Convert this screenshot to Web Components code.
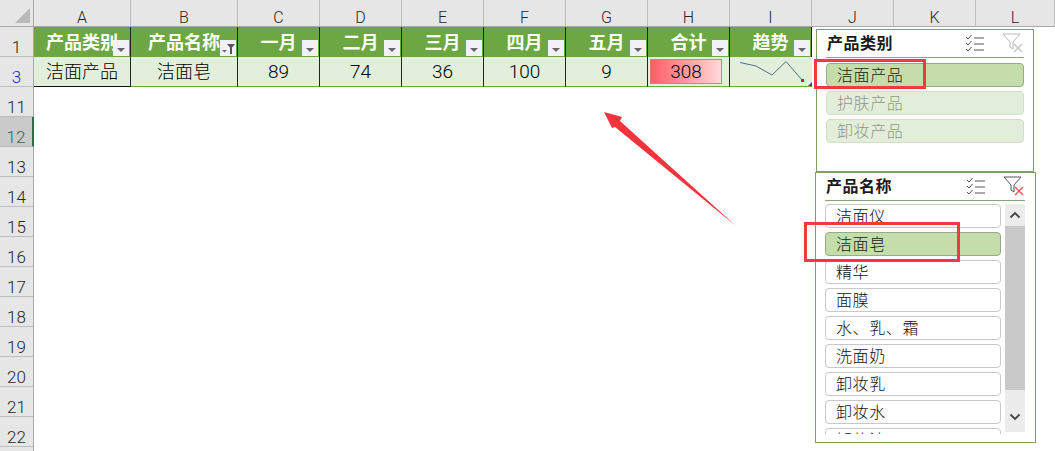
<!DOCTYPE html>
<html lang="zh">
<head>
<meta charset="utf-8">
<style>
  html, body { margin: 0; height: 100%; overflow: hidden; background: #fff; }
  body { font-family: "Noto Sans CJK SC", "Liberation Sans", sans-serif; }
</style>
</head>
<body>
<excel-sheet></excel-sheet>

<sheet-slicer title="产品类别" style="left:816px;top:29px;width:218px;height:143px" inactive>
  <slicer-item selected>洁面产品</slicer-item>
  <slicer-item dim>护肤产品</slicer-item>
  <slicer-item dim>卸妆产品</slicer-item>
</sheet-slicer>

<sheet-slicer title="产品名称" style="left:815px;top:172px;width:221px;height:271px" scroll>
  <slicer-item plain>洁面仪</slicer-item>
  <slicer-item selected>洁面皂</slicer-item>
  <slicer-item plain>精华</slicer-item>
  <slicer-item plain>面膜</slicer-item>
  <slicer-item plain>水、乳、霜</slicer-item>
  <slicer-item plain>洗面奶</slicer-item>
  <slicer-item plain>卸妆乳</slicer-item>
  <slicer-item plain>卸妆水</slicer-item>
  <slicer-item plain>卸妆油</slicer-item>
</sheet-slicer>

<red-marks></red-marks>

<script>
// dropdown button in the table header
class FilterButton extends HTMLElement {
  connectedCallback() {
    const filtered = this.hasAttribute('filtered');
    this.attachShadow({ mode: 'open' }).innerHTML = `
      <style>
        :host { display: block; width: 16px; height: 16px; background: #f1f1f7; }
        svg { display: block; }
      </style>
      <svg width="16" height="16" viewBox="0 0 16 16">
        ${filtered
          ? '<path d="M2 10h5l-2.500 2.500z" fill="#666"/><path d="M7 4h8l-3 3.500V14h-2V7.500z" fill="#555"/>'
          : '<path d="M4 8h8l-4 4z" fill="#666"/>'}
      </svg>`;
  }
}
customElements.define('filter-button', FilterButton);

// the worksheet: row/column headers plus the filtered table
class ExcelSheet extends HTMLElement {
  connectedCallback() {
    const cols = ['A', 'B', 'C', 'D', 'E', 'F', 'G', 'H', 'I', 'J', 'K', 'L'];
    const head = ['产品类别', '产品名称', '一月', '二月', '三月', '四月', '五月', '合计', '趋势'];
    const row = ['洁面产品', '洁面皂', '89', '74', '36', '100', '9'];
    const rows = [11, 12, 13, 14, 15, 16, 17, 18, 19, 20, 21, 22];

    this.attachShadow({ mode: 'open' }).innerHTML = `
      <style>
        :host {
          display: grid;
          width: 1055px;
          height: 451px;
          overflow: hidden;
          grid-template-columns: 34px 97px 107px repeat(9, 82px) 1fr;
          grid-template-rows: 27px 30px 30px repeat(12, 30px) 1fr;
          font-family: "Noto Sans CJK SC", sans-serif;
        }
        .corner, .ch, .rh { background: #e6e6e6; box-sizing: border-box; color: #262626;
          font: 300 16px/1 Roboto, "Liberation Sans", sans-serif; display: flex; }
        .corner { border-right: 1px solid #a8a8a8; border-bottom: 1px solid #a8a8a8; align-items: flex-end; justify-content: flex-end; padding: 0 3px 3px 0; }
        .ch { border-right: 1px solid #bcbcbc; border-bottom: 1px solid #a8a8a8; align-items: flex-end; justify-content: center; }
        .rh { font-size: 17px; border-right: 1px solid #a8a8a8; border-bottom: 1px solid #bcbcbc; align-items: flex-end; justify-content: center; }
        .rh.active { color: #2030c8; }
        .rh.sel { background: #c9cac9; color: #2f6b50; border-right: 2px solid #217346; }
        .th { background: #6ca743; color: #fff; font-weight: 700; font-size: 18px; line-height: 30px;
          box-sizing: border-box; border-right: 1.500px solid #1f2a14; position: relative; text-align: center; white-space: nowrap; }
        .th span { position: relative; top: -1px; }
        .th filter-button { position: absolute; right: 1px; bottom: 1px; }
        .td { background: #e2efda; box-sizing: border-box; border-right: 1.500px solid #1f2a14;
          border-bottom: 1px solid #6ca743; font-family: Roboto, "Noto Sans CJK SC", sans-serif;
          font-size: 18px; font-weight: 300; line-height: 29px; text-align: center; color: #000; position: relative; }
        .td.num { font-size: 19px; }
        .td.first { border-bottom: 1px solid #111; }
        .bar { position: absolute; left: 2px; right: 7px; top: 2px; bottom: 2px; box-sizing: border-box; border: 1px solid #e67b68;
          background: linear-gradient(90deg, #ff5c66, #ffd9d9); line-height: 24px; }
        .td svg { position: absolute; left: 0; top: 0; }
        .wide { grid-column: 2 / -1; grid-row: 4 / -1; background: #fff; }
        .j { grid-column: 11 / -1; grid-row: 2 / 4; background: #fff; }
      </style>
      <div class="corner"><svg width="15" height="15"><path d="M15 0V15H0z" fill="#b9b9b9"/></svg></div>
      ${cols.map(c => `<div class="ch">${c}</div>`).join('')}

      <div class="rh">1</div>
      ${head.map((t, i) => `<div class="th"><span>${t}</span><filter-button ${i === 1 ? 'filtered' : ''}></filter-button></div>`).join('')}
      <div class="j"></div>

      <div class="rh active">3</div>
      ${row.map((t, i) => `<div class="td ${i === 0 ? 'first' : ''} ${i > 1 ? 'num' : ''}">${t}</div>`).join('')}
      <div class="td num"><div class="bar">308</div></div>
      <div class="td" style="border-right:0">
        <svg width="82" height="30" viewBox="0 0 82 30">
          <path d="M10 5.500 26 9 42 18 56 4.500 72 23" fill="none" stroke="#54708c" stroke-width="1"/>
          <rect x="71" y="22" width="3" height="3" fill="#d01818"/>
          <path d="M82 25v4h-4z" fill="#30506e"/>
        </svg>
      </div>

      ${rows.map((n, i) => `<div class="rh ${n === 12 ? 'sel' : ''}" style="grid-column:1;grid-row:${i + 4}">${n}</div>`).join('')}
      <div class="wide"></div>
      <div class="rh" style="grid-column:1;grid-row:16;border-bottom:0"></div>
    `;
  }
}
customElements.define('excel-sheet', ExcelSheet);

// one button of a slicer
class SlicerItem extends HTMLElement {
  constructor() {
    super();
    this.attachShadow({ mode: 'open' }).innerHTML = `
      <style>
        :host {
          display: block; flex: none; height: 24px; box-sizing: border-box;
          border: 1px solid #c8c8c8; border-radius: 4px; padding-left: 10px;
          font-size: 16px; font-weight: 300; line-height: 21px; letter-spacing: .6px; white-space: nowrap; color: #111; background: #fff;
        }
        :host([selected]) { background: #c5dcab; border-color: #9aa98c; color: #141d10; }
        :host([dim]) { background: #e2eeda; border-color: #d3ddcb; color: #8f968a; }
      </style>
      <slot></slot>`;
  }
}
customElements.define('slicer-item', SlicerItem);

// floating slicer panel, items come in through the slot
class SheetSlicer extends HTMLElement {
  connectedCallback() {
    const scroll = this.hasAttribute('scroll');
    const inactive = this.hasAttribute('inactive');
    const funnel = inactive ? '#b9b9b9' : '#555';
    this.attachShadow({ mode: 'open' }).innerHTML = `
      <style>
        :host {
          display: flex; flex-direction: column; position: absolute; box-sizing: border-box;
          background: #fff; border: 1px solid #7f9f62; padding: 0 ${scroll ? 10 : 9}px 0 9px;
          font-family: "Noto Sans CJK SC", sans-serif;
        }
        header { display: flex; align-items: center; height: 27px; flex: none; border-bottom: 1px solid #8aa573; }
        h1 { margin: 0 0 3px; font-size: 16px; font-weight: 700; letter-spacing: .5px; color: #1a1a1a; flex: 1; position: relative; left: 1px; }
        header svg { display: block; flex: none; position: relative; top: -1px; }
        .multi { margin-right: 17px; }
        .body { display: flex; gap: 4px; margin-top: ${scroll ? 3 : 5}px; height: ${scroll ? '228px' : 'auto'}; }
        .list { flex: 1; min-width: 0; display: flex; flex-direction: column; gap: 4px; overflow: hidden; ${scroll ? 'margin-bottom: -2px;' : ''} }
        .bar { width: 20px; flex: none; background: #ececec; display: flex; flex-direction: column; }
        .up, .down { height: 22px; flex: none; display: flex; align-items: center; justify-content: center; }
        .down { margin-top: auto; height: 42px; padding-top: 12px; box-sizing: border-box; }
        .thumb { height: 164px; flex: none; background: #c9c9c9; }
      </style>
      <header>
        <h1>${this.getAttribute('title')}</h1>
        <svg class="multi" width="20" height="18" viewBox="0 0 20 18" fill="none" stroke="#555" stroke-width="1">
          <path d="M1 3l2 2 3.500-4M1 9l2 2 3.500-4M1 15l2 2 3.500-4"/>
          <path d="M9 4h10M9 10h10M9 16h10"/>
        </svg>
        <svg width="22" height="20" viewBox="0 0 22 20" fill="none" stroke-width="1">
          <path d="M1 1H18L11 9V16L8 14V9Z" stroke="${funnel}"/>
          <path d="M12 11l8 8M20 11l-8 8" stroke="${inactive ? '#c4c4c4' : '#e8505a'}" stroke-width="1.300"/>
        </svg>
      </header>
      <div class="body">
        <div class="list"><slot></slot></div>
        ${scroll ? `<div class="bar">
          <div class="up"><svg width="12" height="8"><path d="M1.500 6.500 6 2l4.500 4.500" fill="none" stroke="#444" stroke-width="1.800"/></svg></div>
          <div class="thumb"></div>
          <div class="down"><svg width="12" height="8"><path d="M1.500 1.500 6 6l4.500-4.500" fill="none" stroke="#444" stroke-width="1.800"/></svg></div>
        </div>` : ''}
      </div>`;
  }
}
customElements.define('sheet-slicer', SheetSlicer);

// hand-drawn annotations lying over the sheet
class RedMarks extends HTMLElement {
  connectedCallback() {
    this.attachShadow({ mode: 'open' }).innerHTML = `
      <style>
        :host { display: block; position: absolute; left: 0; top: 0; width: 1055px; height: 451px; pointer-events: none; }
      </style>
      <svg width="1055" height="451">
        <rect x="815.500" y="60.500" width="109" height="27" fill="none" stroke="#ee3b3f" stroke-width="3"/>
        <rect x="805.500" y="223.500" width="153" height="37" fill="none" stroke="#ee3b3f" stroke-width="3"/>
        <path d="M604 112 622 117 620 121 736 226 615 127 612 128Z" fill="#f4343c"/>
      </svg>`;
  }
}
customElements.define('red-marks', RedMarks);
</script>
</body>
</html>
